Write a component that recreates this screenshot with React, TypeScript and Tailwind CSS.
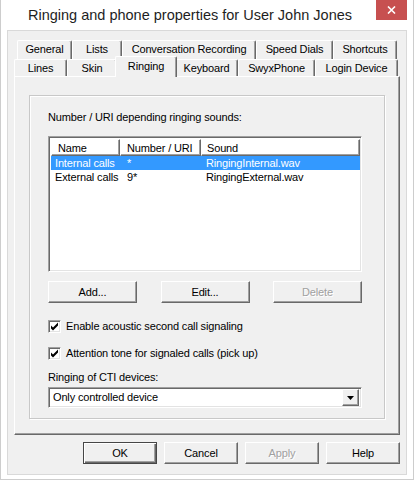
import React from "react"

const ui = "font-['Liberation_Sans',Arial,sans-serif] text-[11px] leading-[13px] tracking-[-0.15px] text-black whitespace-nowrap"

// classic raised 3D frame used by buttons, tabs and header cells
const raised =
  "border border-t-white border-l-white border-r-[#696969] border-b-[#696969] shadow-[inset_-1px_-1px_0_#a0a0a0]"
// sunken frame for list view, combo box and check boxes
const sunken =
  "border border-t-[#a0a0a0] border-l-[#a0a0a0] border-r-white border-b-white shadow-[inset_1px_1px_0_#696969,inset_-1px_-1px_0_#e3e3e3]"

function Tab({ label, className, active }: { label: string; className: string; active?: boolean }) {
  return (
    <div
      className={
        "flex justify-center rounded-t-[2px] bg-[#f0f0f0] border-l border-t border-r border-l-white border-t-white border-r-[#696969] shadow-[inset_-1px_0_0_#a0a0a0] " +
        (active ? "relative z-10 -mt-[3px] -mb-px -mx-[2px] pt-[3px] " : "pt-[2px] ") +
        className
      }
    >
      {label}
    </div>
  )
}

function Button({ label, disabled, isDefault, className }: { label: string; disabled?: boolean; isDefault?: boolean; className: string }) {
  return (
    <div
      className={
        "flex items-center justify-center h-[22px] bg-[#f0f0f0] " +
        (isDefault
          ? "border border-[#464646] shadow-[inset_1px_1px_0_#fff,inset_-1px_-1px_0_#696969,inset_-2px_-2px_0_#a0a0a0] "
          : raised + " ") +
        (disabled ? "text-[#a0a0a0] [text-shadow:1px_1px_0_#fff] " : "") +
        className
      }
    >
      {label}
    </div>
  )
}

function CheckRow({ label, className }: { label: string; className: string }) {
  return (
    <div className={"flex items-center h-[13px] " + className}>
      <div className={"w-[13px] h-[13px] bg-white flex items-center justify-center " + sunken}>
        <svg width="9" height="9" viewBox="0 0 9 9">
          <path d="M1 3.5 L3 5.5 L8 0.5 L8 3.5 L3 8.5 L1 6.5 Z" fill="#000" />
        </svg>
      </div>
      <span className="ml-[5px]">{label}</span>
    </div>
  )
}

export default function App() {
  const rows = [
    { name: "Internal calls", num: "*", sound: "RingingInternal.wav", selected: true },
    { name: "External calls", num: "9*", sound: "RingingExternal.wav", selected: false },
  ]

  return (
    <div className={"w-[414px] h-[480px] bg-white border-l border-r border-b border-[#cdcdcd] flex flex-col " + ui}>
      {/* title bar */}
      <div className="h-[30px] flex justify-between shrink-0">
        <div className="pl-[27px] pt-[6px] text-[14.5px] leading-[18px] text-[#1e1e1e] font-['Liberation_Sans',Arial,sans-serif] tracking-normal">
          Ringing and phone properties for User John Jones
        </div>
        <div className="w-[31px] h-[20px] mr-[6px] bg-[#c75050] flex items-center justify-center">
          <svg width="9" height="8" viewBox="0 0 9 8">
            <path d="M1 0.5 L8 7.5 M8 0.5 L1 7.5" stroke="#fff" strokeWidth="1.6" />
          </svg>
        </div>
      </div>

      {/* dialog body */}
      <div className="ml-[6px] w-[400px] h-[445px] border border-[#d9d9d9] bg-[#f0f0f0] pl-[6px] pt-[9px]">
        {/* tab strip, back row */}
        <div className="flex h-[19px] ml-[3px]">
          <Tab label="General" className="w-[55px]" />
          <Tab label="Lists" className="w-[50px]" />
          <Tab label="Conversation Recording" className="w-[134px]" />
          <Tab label="Speed Dials" className="w-[77px]" />
          <Tab label="Shortcuts" className="w-[64px]" />
        </div>
        {/* tab strip, front row */}
        <div className="flex h-[17px]">
          <Tab label="Lines" className="w-[53px]" />
          <Tab label="Skin" className="w-[50px]" />
          <Tab label="Ringing" active className="w-[62px]" />
          <Tab label="Keyboard" className="w-[63px]" />
          <Tab label="SwyxPhone" className="w-[77px]" />
          <Tab label="Login Device" className="w-[83px]" />
        </div>

        {/* tab page */}
        <div className={"w-[386px] h-[359px] pl-[14px] pt-[18px] " + raised}>
          <div className="w-[356px] h-[324px] border border-[#c8c8c8] shadow-[1px_1px_0_#fff,inset_1px_1px_0_#fff] pl-[18px] pt-[15px]">
            <div>Number / URI depending ringing sounds:</div>

            {/* list view */}
            <div className={"mt-[12px] w-[314px] h-[136px] bg-white p-px " + sunken}>
              <div className="flex h-[18px] pl-px pt-px">
                <div className={"w-[69px] pl-[6px] pt-[2px] " + raised}>Name</div>
                <div className={"w-[81px] pl-[6px] pt-[2px] " + raised}>Number / URI</div>
                <div className={"w-[159px] pl-[5px] pt-[2px] " + raised}>Sound</div>
              </div>
              {rows.map((r) => (
                <div
                  key={r.name}
                  className={"flex h-[14px] items-center ml-px w-[309px] " + (r.selected ? "bg-[#3399ff] text-white" : "")}
                >
                  <div className="w-[69px] shrink-0 pl-[4px]">{r.name}</div>
                  <div className="w-[81px] shrink-0 pl-[7px]">{r.num}</div>
                  <div className="pl-[5px]">{r.sound}</div>
                </div>
              ))}
            </div>

            <div className="mt-[9px] w-[314px] flex justify-between">
              <Button label="Add..." className="w-[89px]" />
              <Button label="Edit..." className="w-[89px]" />
              <Button label="Delete" disabled className="w-[89px]" />
            </div>

            <CheckRow label="Enable acoustic second call signaling" className="mt-[17px]" />
            <CheckRow label="Attention tone for signaled calls (pick up)" className="mt-[14px]" />

            <div className="mt-[11px]">Ringing of CTI devices:</div>

            {/* combo box */}
            <div className={"mt-[3px] w-[314px] h-[21px] bg-white flex items-center p-[2px] " + sunken}>
              <span className="flex-1 pl-[2px]">Only controlled device</span>
              <div className={"w-[17px] h-[17px] bg-[#f0f0f0] flex items-center justify-center " + raised}>
                <svg width="7" height="4" viewBox="0 0 7 4">
                  <path d="M0 0 H7 L3.5 4 Z" fill="#000" />
                </svg>
              </div>
            </div>
          </div>
        </div>

        {/* dialog buttons */}
        <div className="w-[386px] flex justify-end gap-[7px] mt-[7px]">
          <Button label="OK" isDefault className="w-[74px]" />
          <Button label="Cancel" className="w-[74px]" />
          <Button label="Apply" disabled className="w-[74px]" />
          <Button label="Help" className="w-[74px]" />
        </div>
      </div>
    </div>
  )
}
